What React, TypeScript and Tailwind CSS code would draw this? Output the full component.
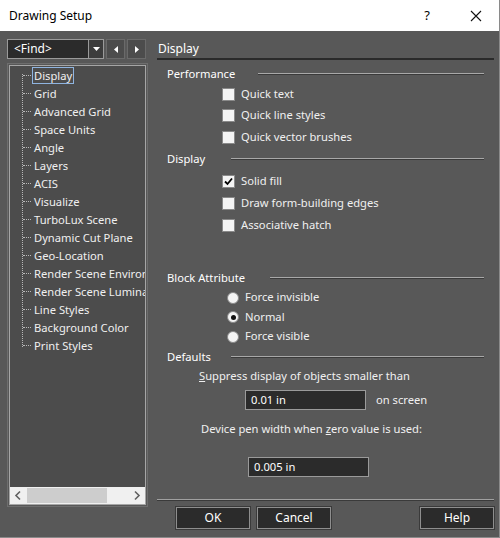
import React from "react";

const treeItems = [
  "Display",
  "Grid",
  "Advanced Grid",
  "Space Units",
  "Angle",
  "Layers",
  "ACIS",
  "Visualize",
  "TurboLux Scene",
  "Dynamic Cut Plane",
  "Geo-Location",
  "Render Scene Environment",
  "Render Scene Luminance",
  "Line Styles",
  "Background Color",
  "Print Styles",
];

function Section({ label, lineFrom }: { label: string; lineFrom: number }) {
  return (
    <div className="flex items-center h-full pl-[10px]">
      <span className="text-white" style={{ width: lineFrom }}>
        {label}
      </span>
      <div className="flex-1 mr-[10px] border-t border-t-[#a8a8a8] border-b border-b-[#3a3a3a]" />
    </div>
  );
}

function Check({ label, checked, h }: { label: string; checked?: boolean; h: string }) {
  return (
    <div className={`flex items-center pl-[65px] ${h}`}>
      <div className="w-[13px] h-[13px] bg-[#f4f4f4] border border-[#8a8a8a] flex items-center justify-center">
        {checked && (
          <svg width="9" height="9" viewBox="0 0 9 9">
            <path d="M1 4.5 L3.5 7 L8 1.5" stroke="#000" strokeWidth="1.8" fill="none" />
          </svg>
        )}
      </div>
      <span className="ml-[6px] text-[#f0f0f0]">{label}</span>
    </div>
  );
}

function Radio({ label, checked, h }: { label: string; checked?: boolean; h: string }) {
  return (
    <div className={`flex items-center pl-[70px] ${h}`}>
      <div className="w-[12px] h-[12px] rounded-full bg-[#f4f4f4] border border-[#8a8a8a] flex items-center justify-center">
        {checked && <div className="w-[5px] h-[5px] rounded-full bg-[#111]" />}
      </div>
      <span className="ml-[6px] text-[#f0f0f0]">{label}</span>
    </div>
  );
}

function Btn({ label }: { label: string }) {
  return (
    <button className="w-[74px] h-[22px] bg-[#2b2b2b] border border-[#8e8e8e] text-white outline outline-1 outline-[#3a3a3a] flex items-center justify-center">
      {label}
    </button>
  );
}

export default function App() {
  return (
    <div
      className="w-[500px] h-[538px] bg-[#585858] flex flex-col text-[11.2px] border-r border-[#8a8a8a] border-b"
      style={{ fontFamily: '"Noto Sans", "Segoe UI", sans-serif' }}
    >
      {/* title bar */}
      <div className="h-[31px] bg-white flex items-center shrink-0 text-[12px]">
        <span className="ml-[9px] text-black">Drawing Setup</span>
        <span className="ml-auto mr-[40px] text-black text-[13px]">?</span>
        <svg width="12" height="12" viewBox="0 0 12 12" className="mr-[17px]">
          <path d="M1 1 L11 11 M11 1 L1 11" stroke="#111" strokeWidth="1.1" />
        </svg>
      </div>

      <div className="flex flex-1 pt-[8px]">
        {/* left column */}
        <div className="w-[141px] ml-[7px] flex flex-col">
          <div className="flex h-[20px] gap-[2px]">
            <div className="flex w-[97px] bg-[#2b2b2b] border border-[#9a9a9a]">
              <span className="flex-1 pl-[6px] text-white leading-[18px] text-[12px]">&lt;Find&gt;</span>
              <div className="w-[15px] border-l border-[#9a9a9a] bg-[#3c3c3c] flex items-center justify-center">
                <svg width="7" height="4" viewBox="0 0 7 4">
                  <path d="M0 0 H7 L3.5 4 Z" fill="#fff" />
                </svg>
              </div>
            </div>
            <div className="w-[19px] border border-[#6a6a6a] bg-[#4c4c4c] flex items-center justify-center">
              <svg width="4" height="7" viewBox="0 0 4 7">
                <path d="M4 0 V7 L0 3.5 Z" fill="#fff" />
              </svg>
            </div>
            <div className="w-[19px] border border-[#6a6a6a] bg-[#4c4c4c] flex items-center justify-center">
              <svg width="4" height="7" viewBox="0 0 4 7">
                <path d="M0 0 V7 L4 3.5 Z" fill="#fff" />
              </svg>
            </div>
          </div>

          <div className="mt-[4px] h-[444px] border border-[#6e6e6e] p-[1px]">
            <div className="h-full border border-[#a6a6a6] bg-[#4c4c4c] flex flex-col overflow-hidden">
              <div className="flex-1 relative">
                {/* vertical dotted line */}
                <div className="absolute left-[12px] top-[8px] h-[273px] border-l border-dotted border-[#b8b8b8]" />
                {treeItems.map((t, i) => (
                  <div key={t} className="flex items-center h-[18px] whitespace-nowrap">
                    <div className="ml-[13px] w-[8px] shrink-0 border-t border-dotted border-[#b8b8b8]" />
                    <span
                      className={`ml-[1px] px-[1px] leading-[15px] text-[#f0f0f0] ${
                        i === 0 ? "border border-[#8fb4e0]" : "border border-transparent"
                      }`}
                    >
                      {t}
                    </span>
                  </div>
                ))}
              </div>
              <div className="h-[17px] bg-[#f0f0f0] flex items-center shrink-0">
                <svg width="17" height="17" viewBox="0 0 17 17">
                  <path d="M10 4.5 L6 8.5 L10 12.5" stroke="#606060" strokeWidth="1.6" fill="none" />
                </svg>
                <div className="w-[80px] h-[15px] bg-[#cdcdcd]" />
                <div className="flex-1" />
                <svg width="17" height="17" viewBox="0 0 17 17">
                  <path d="M7 4.5 L11 8.5 L7 12.5" stroke="#606060" strokeWidth="1.6" fill="none" />
                </svg>
              </div>
            </div>
          </div>
        </div>

        {/* right column */}
        <div className="ml-[9px] w-[337px] flex flex-col">
          <div className="h-[19px] flex items-center text-white text-[12px]">
            <span className="ml-[1px]">Display</span>
          </div>
          <div className="h-[2px] bg-[#2a2a2a]" />

          <div className="h-[4px]" />
          <div className="h-[20px]">
            <Section label="Performance" lineFrom={91} />
          </div>
          <Check label="Quick text" h="h-[20px]" />
          <Check label="Quick line styles" h="h-[22px]" />
          <Check label="Quick vector brushes" h="h-[22px]" />
          <div className="h-[22px]">
            <Section label="Display" lineFrom={64} />
          </div>
          <Check label="Solid fill" checked h="h-[22px]" />
          <Check label="Draw form-building edges" h="h-[22px]" />
          <Check label="Associative hatch" h="h-[22px]" />

          <div className="h-[32px]" />
          <div className="h-[20px]">
            <Section label="Block Attribute" lineFrom={103} />
          </div>
          <Radio label="Force invisible" h="h-[19px]" />
          <Radio label="Normal" checked h="h-[20px]" />
          <Radio label="Force visible" h="h-[19px]" />
          <div className="h-[22px]">
            <Section label="Defaults" lineFrom={64} />
          </div>
          <div className="h-[16px] flex items-center pl-[42px] text-[#f0f0f0]">
            <span>
              <span className="underline">S</span>uppress display of objects smaller than
            </span>
          </div>
          <div className="mt-[6px] h-[20px] flex items-center pl-[88px]">
            <div className="w-[121px] h-[20px] bg-[#2b2b2b] border border-[#9a9a9a] text-white pl-[5px] leading-[18px]">
              0.01 in
            </div>
            <span className="ml-[10px] text-[#f0f0f0]">on screen</span>
          </div>
          <div className="mt-[10px] h-[18px] flex items-center pl-[44px] text-[#f0f0f0]">
            <span>
              Device pen width when <span className="underline">z</span>ero value is used:
            </span>
          </div>
          <div className="mt-[19px] h-[20px] flex items-center pl-[91px]">
            <div className="w-[121px] h-[20px] bg-[#2b2b2b] border border-[#9a9a9a] text-white pl-[5px] leading-[18px]">
              0.005 in
            </div>
          </div>

          <div className="mt-[22px] h-[2px] border-t border-t-[#a0a0a0] border-b border-b-[#3a3a3a]" />
          <div className="mt-[6px] flex items-center h-[22px] text-[12px]">
            <div className="ml-[19px]">
              <Btn label="OK" />
            </div>
            <div className="ml-[7px]">
              <Btn label="Cancel" />
            </div>
            <div className="ml-auto">
              <Btn label="Help" />
            </div>
          </div>
        </div>
      </div>
    </div>
  );
}
